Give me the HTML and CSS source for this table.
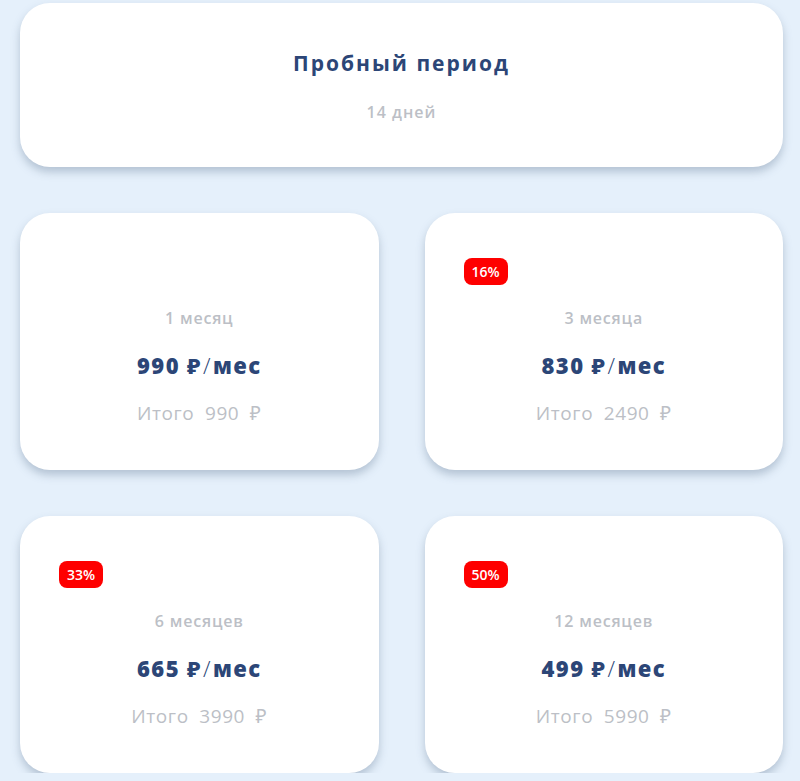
FILE: index.html
```html
<!DOCTYPE html>
<html lang="ru">
<head>
    <meta charset="UTF-8">
    <meta name="viewport" content="width=device-width, initial-scale=1.0">
    <title>Тарифы</title>
    <link rel="stylesheet" href="styles.css">
</head>
<body>
    <div class="plans">
        <div class="trial">
            <div class="trial-title">Пробный период</div>
            <div class="trial-days">14 дней</div>
        </div>
        <div class="grid">
            <div class="plan">
                <div class="badge empty"></div>
                <div class="period">1 месяц</div>
                <div class="price">990 ₽<span class="slash">/</span>мес</div>
                <div class="total">Итого 990 ₽</div>
            </div>
            <div class="plan">
                <div class="badge">16%</div>
                <div class="period">3 месяца</div>
                <div class="price">830 ₽<span class="slash">/</span>мес</div>
                <div class="total">Итого 2490 ₽</div>
            </div>
            <div class="plan">
                <div class="badge">33%</div>
                <div class="period">6 месяцев</div>
                <div class="price">665 ₽<span class="slash">/</span>мес</div>
                <div class="total">Итого 3990 ₽</div>
            </div>
            <div class="plan">
                <div class="badge">50%</div>
                <div class="period">12 месяцев</div>
                <div class="price">499 ₽<span class="slash">/</span>мес</div>
                <div class="total">Итого 5990 ₽</div>
            </div>
        </div>
    </div>
</body>
</html>
```

FILE: styles.css
```css
body {
    margin: 0;
    background-color: #e5f0fb;
    font-family: "Open Sans", "Noto Sans", sans-serif;
}
.plans {
    width: 763px;
    padding: 3px 0 0 20px;
}
.trial, .plan {
    background-color: #fff;
    border-radius: 30px;
    box-shadow: 0 5px 8px rgba(120, 140, 165, 0.45);
}
.trial {
    height: 164px;
    box-sizing: border-box;
    padding-top: 46px;
    text-align: center;
}
.trial-title {
    font-size: 21px;
    line-height: 28px;
    font-weight: bold;
    color: #2c4677;
    letter-spacing: 2px;
}
.trial-days {
    margin-top: 24px;
    font-size: 16px;
    line-height: 22px;
    font-weight: 600;
    color: #bcbfc6;
    letter-spacing: 1px;
}
.grid {
    display: grid;
    grid-template-columns: 1fr 1fr;
    gap: 46px;
    margin-top: 46px;
}
.plan {
    height: 257px;
    box-sizing: border-box;
    padding: 45px 39px 0;
    text-align: center;
}
.badge {
    width: fit-content;
    height: 27px;
    padding: 0 8px;
    border-radius: 8px;
    background-color: #fe0000;
    color: #fff;
    font-size: 14px;
    line-height: 27px;
    font-weight: 600;
}
.badge.empty {
    visibility: hidden;
}
.period {
    margin-top: 23px;
    font-size: 16px;
    line-height: 20px;
    font-weight: 600;
    color: #bcbfc6;
    letter-spacing: 0.8px;
}
.price {
    margin-top: 23px;
    font-size: 22px;
    line-height: 28px;
    font-weight: 800;
    color: #2c4677;
    letter-spacing: 1.4px;
}
.slash {
    font-weight: 300;
    margin: 0 1px;
}
.total {
    margin-top: 22px;
    font-size: 19px;
    line-height: 24px;
    color: #bcbfc6;
    letter-spacing: 0.6px;
    word-spacing: 5px;
}
```
